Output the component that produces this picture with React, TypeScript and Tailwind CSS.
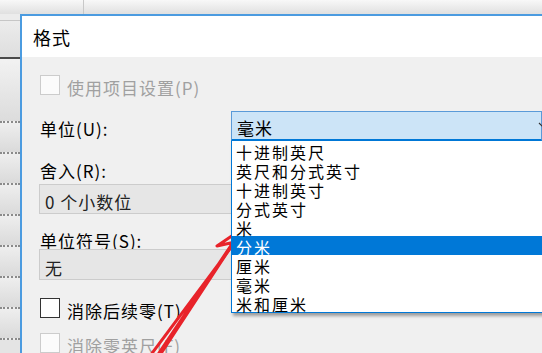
const units = [
  "十进制英尺",
  "英尺和分式英寸",
  "十进制英寸",
  "分式英寸",
  "米",
  "分米",
  "厘米",
  "毫米",
  "米和厘米",
];

const txt = "text-[17px] leading-[20px] tracking-[1px]";

const CheckRow = ({ label, disabled }: { label: string; disabled?: boolean }) => {
  return (
    <div className="flex items-center h-[20px]">
      <div
        className={
          disabled
            ? "w-[20px] h-[20px] border border-[#cccccc] bg-[#fbfbfb]"
            : "w-[20px] h-[20px] border border-[#333333] bg-white"
        }
      />
      <span className={"ml-[7px] pt-[6px] " + txt + (disabled ? " text-[#a0a0a0]" : " text-black")}>
        {label}
      </span>
    </div>
  );
};

const LeftStrip = () => {
  return (
    <div className="w-[20px] flex flex-col bg-[#e4e4e4]">
      <div className="h-[6px] bg-[#ececec]" />
      <div className="h-px bg-[#c6c6c6]" />
      <div className="h-[36px] bg-linear-to-b from-[#ececec] to-[#dedede]" />
      <div className="h-[2px] bg-[#4a4a4a]" />
      <div className="h-[64px] bg-linear-to-b from-[#f2f2f2] to-[#dcdcdc] border-b-2 border-dotted border-[#8a8a8a]" />
      {[0, 1, 2, 3, 4, 5, 6].map((i) => (
        <div
          key={i}
          className="h-[31px] shrink-0 bg-linear-to-b from-[#eeeeee] to-[#dadada] border-b-2 border-dotted border-[#8a8a8a]"
        />
      ))}
    </div>
  );
};

const Arrow = () => {
  return (
    <svg className="absolute inset-0 pointer-events-none" width="542" height="353" viewBox="0 0 542 353">
      <g fill="none" stroke="#e8232a" strokeWidth="3" strokeLinecap="round" strokeLinejoin="round">
        <polyline points="157,356 242,229 217,246 235,242 150,356" />
        <polyline points="162,352 238,236" />
      </g>
    </svg>
  );
};

export default function App() {
  return (
    <div className="relative w-[542px] h-[353px] overflow-hidden bg-[#f0f0f0] font-['Noto_Sans_CJK_SC','Noto_Sans',sans-serif]">
      <div className="flex h-[14px]">
        <div className="w-[84px] border-r border-[#c8c8c8] bg-linear-to-b from-[#f8f8f8] to-[#e0e0e0]" />
        <div className="flex-1 bg-linear-to-b from-[#f8f8f8] to-[#e0e0e0]" />
      </div>

      <div className="flex h-[339px]">
        <LeftStrip />

        <div className="flex-1 flex flex-col border-l-2 border-t-2 border-[#4b9be0]">
          <div className="h-[45px] bg-white pl-[11px] pt-[2px] flex items-center text-[18px] tracking-[1px] text-black">
            格式
          </div>

          <div className="flex-1 flex flex-col pl-[18px]">
            <div className="mt-[18px]">
              <CheckRow label="使用项目设置(P)" disabled />
            </div>

            <div className="mt-[16px] flex items-center h-[30px]">
              <span className={"w-[191px] pt-[6px] text-black " + txt}>单位(U):</span>
              <div className="relative flex-1 h-[30px] z-10">
                <div className="h-full flex items-center bg-[#cce4f7] border border-[#5a9ad8] border-b-2 border-b-[#0078d7] pl-[5px] pt-[5px] text-[17px] tracking-[1px] text-black">
                  毫米
                  <svg className="absolute right-[-5px] top-[11px]" width="9" height="6" viewBox="0 0 9 6">
                    <path d="M1 1 L4.5 4.5 L8 1" fill="none" stroke="#333" strokeWidth="1.2" />
                  </svg>
                </div>
                <div className="absolute left-0 top-full w-[330px] bg-white border border-t-0 border-[#0078d7] shadow-[2px_3px_3px_rgba(0,0,0,0.35)]">
                  {units.map((u) => (
                    <div
                      key={u}
                      className={
                        "h-[19px] pl-[4px] pt-[3px] text-[16px] leading-[16px] tracking-[2px] " +
                        (u === "分米" ? "bg-[#0078d7] text-white" : "text-black")
                      }
                    >
                      {u}
                    </div>
                  ))}
                </div>
              </div>
            </div>

            <span className={"mt-[20px] h-[20px] text-black " + txt}>舍入(R):</span>
            <div className="mt-[3px] -ml-px w-[400px] h-[30px] flex items-center pl-[5px] pt-[6px] bg-[#e6e6e6] border border-[#cccccc] text-[17px] tracking-[1px] text-[#222222]">
              0 个小数位
            </div>

            <span className={"mt-[17px] h-[20px] text-black " + txt}>单位符号(S):</span>
            <div className="-mt-[2px] -ml-px w-[400px] h-[31px] flex items-center pl-[5px] pt-[6px] bg-[#e6e6e6] border border-[#cccccc] text-[17px] tracking-[1px] text-[#222222]">
              无
            </div>

            <div className="mt-[18px]">
              <CheckRow label="消除后续零(T)" />
            </div>
            <div className="mt-[15px]">
              <CheckRow label="消除零英尺(F)" disabled />
            </div>
          </div>
        </div>
      </div>

      <Arrow />
    </div>
  );
}
